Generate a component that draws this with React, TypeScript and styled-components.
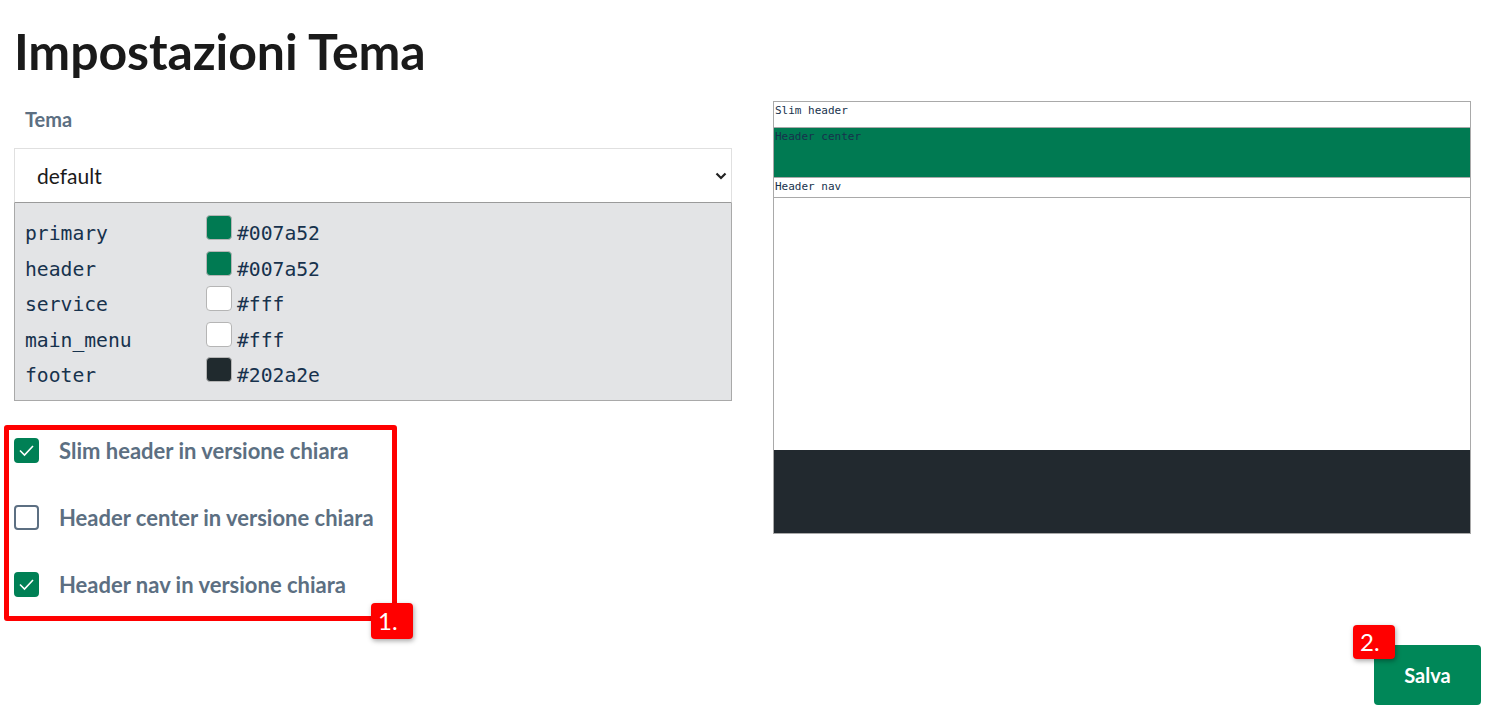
import React from "react";
import styled, { createGlobalStyle } from "styled-components";

const Global = createGlobalStyle`
  html, body { margin: 0; padding: 0; background: #fff; }
  body { font-family: "Lato", "Noto Sans", sans-serif; color: #1a1a1a; }
  * { box-sizing: border-box; }
`;

const Page = styled.div`
  width: 1502px;
  height: 715px;
  padding: 0 21px 0 14px;
  overflow: hidden;
`;

const Title = styled.h1`
  margin: 0;
  padding-top: 21px;
  height: 96px;
  font-family: "Lato", sans-serif;
  font-weight: 700;
  font-size: 50px;
  line-height: 60px;
  color: #1a1a1a;
  letter-spacing: -0.1px;
`;

const Columns = styled.div`
  display: grid;
  grid-template-columns: 718px 698px;
  column-gap: 41px;
  align-items: start;
`;

const Left = styled.div`
  display: flex;
  flex-direction: column;
`;

const FieldLabel = styled.label`
  display: block;
  padding-left: 11px;
  margin-top: 8px;
  height: 44px;
  font-family: "Lato", sans-serif;
  font-weight: 700;
  font-size: 20px;
  line-height: 30px;
  color: #5c6f82;
`;

const SelectBox = styled.div`
  height: 55px;
  display: flex;
  align-items: center;
  justify-content: space-between;
  padding: 0 4px 0 22px;
  background: #fff;
  border: 1px solid #e0e0e0;
  border-bottom: 1px solid #9a9a9a;
  font-family: "Lato", sans-serif;
  font-size: 21px;
  color: #1a1a1a;
`;

const ColorTable = styled.div`
  background: #e3e4e6;
  border: 1px solid #a9a9a9;
  border-top: none;
  padding: 12px 10px 7px 10px;
  display: flex;
  flex-direction: column;
`;

const ColorRow = styled.div`
  display: flex;
  align-items: flex-start;
  height: 35.5px;
  font-family: "DejaVu Sans Mono", monospace;
  font-size: 19.7px;
  color: #17324d;
`;

const ColorName = styled.span`
  width: 181px;
  line-height: 38px;
`;

const Swatch = styled.span<{ $c: string }>`
  width: 26px;
  height: 25px;
  border-radius: 4px;
  border: 1px solid #b5b5b5;
  background: ${(p) => p.$c};
  margin-right: 5px;
`;

const ColorValue = styled.span`
  line-height: 38px;
`;

const Annotated = styled.div`
  position: relative;
  margin: 24px 0 0 -10px;
  width: 393px;
  height: 196px;
  border: 5px solid #ff0000;
  border-radius: 3px;
  padding: 0 0 0 5px;
  display: flex;
  flex-direction: column;
`;

const Badge = styled.div`
  position: absolute;
  width: 42px;
  height: 36px;
  background: #ff0000;
  border-radius: 4px;
  color: #fff;
  font-family: "Lato", sans-serif;
  font-weight: 400;
  font-size: 24px;
  line-height: 36px;
  padding-left: 7px;
  text-align: left;
  box-shadow: 1px 2px 5px rgba(0, 0, 0, 0.35);
`;

const BadgeOne = styled(Badge)`
  right: -21px;
  bottom: -23px;
`;

const CheckRow = styled.label<{ $first?: boolean }>`
  display: flex;
  flex: none;
  align-items: center;
  height: 67px;
  gap: 20px;
  margin-top: ${(p) => (p.$first ? "-12.5px" : "0")};
  font-family: "Lato", sans-serif;
  font-weight: 700;
  font-size: 22px;
  color: #5c6f82;
`;

const Box = styled.span<{ $on: boolean }>`
  width: 25px;
  height: 25px;
  flex: none;
  border-radius: 4px;
  display: flex;
  align-items: center;
  justify-content: center;
  background: ${(p) => (p.$on ? "#008055" : "#fff")};
  border: 2px solid ${(p) => (p.$on ? "#008055" : "#5c6f82")};
`;

const Preview = styled.div`
  margin-top: 5px;
  height: 433px;
  border: 1px solid #a9a9a9;
  display: flex;
  flex-direction: column;
  font-family: "DejaVu Sans Mono", monospace;
  font-size: 11px;
  line-height: 16px;
  color: #17324d;
`;

const Section = styled.div<{ $bg: string; $h: number }>`
  height: ${(p) => p.$h}px;
  flex: none;
  background: ${(p) => p.$bg};
  border-bottom: 1px solid #a9a9a9;
  padding: 1px 1px 0;
`;

const Body = styled.div`
  flex: 1;
`;

const Footer = styled.div`
  height: 83px;
  background: #22292f;
`;

const Actions = styled.div`
  display: flex;
  justify-content: flex-end;
  margin-top: 24px;
`;

const SaveButton = styled.button`
  position: relative;
  width: 107px;
  height: 60px;
  border: none;
  border-radius: 4px;
  background: #008758;
  color: #fff;
  font-family: "Lato", sans-serif;
  font-weight: 700;
  font-size: 20px;
  cursor: pointer;
`;

const BadgeTwo = styled(Badge)`
  left: -21px;
  top: -20px;
  line-height: 34px;
  height: 34px;
`;

const Check = () => (
  <svg width="17" height="13" viewBox="0 0 17 13" fill="none">
    <path d="M2 6.5 L6.5 11 L15 2" stroke="#fff" strokeWidth="1.6" />
  </svg>
);

const Chevron = () => (
  <svg width="12" height="8" viewBox="0 0 12 8" fill="none">
    <path d="M1.5 1.5 L6 6 L10.5 1.5" stroke="#222" strokeWidth="2.2" />
  </svg>
);

const colors = [
  { name: "primary", value: "#007a52" },
  { name: "header", value: "#007a52" },
  { name: "service", value: "#fff" },
  { name: "main_menu", value: "#fff" },
  { name: "footer", value: "#202a2e" },
];

const checks = [
  { label: "Slim header in versione chiara", on: true },
  { label: "Header center in versione chiara", on: false },
  { label: "Header nav in versione chiara", on: true },
];

export default function App() {
  return (
    <Page>
      <Global />
      <Title>Impostazioni Tema</Title>
      <Columns>
        <Left>
          <FieldLabel>Tema</FieldLabel>
          <SelectBox>
            <span>default</span>
            <Chevron />
          </SelectBox>
          <ColorTable>
            {colors.map((c) => (
              <ColorRow key={c.name}>
                <ColorName>{c.name}</ColorName>
                <Swatch $c={c.value} />
                <ColorValue>{c.value}</ColorValue>
              </ColorRow>
            ))}
          </ColorTable>
          <Annotated>
            {checks.map((c, i) => (
              <CheckRow key={c.label} $first={i === 0}>
                <Box $on={c.on}>{c.on && <Check />}</Box>
                {c.label}
              </CheckRow>
            ))}
            <BadgeOne>1.</BadgeOne>
          </Annotated>
        </Left>
        <Preview>
          <Section $bg="#fff" $h={26}>Slim header</Section>
          <Section $bg="#007a52" $h={50}>Header center</Section>
          <Section $bg="#fff" $h={20}>Header nav</Section>
          <Body />
          <Footer />
        </Preview>
      </Columns>
      <Actions>
        <SaveButton>
          Salva
          <BadgeTwo>2.</BadgeTwo>
        </SaveButton>
      </Actions>
    </Page>
  );
}
